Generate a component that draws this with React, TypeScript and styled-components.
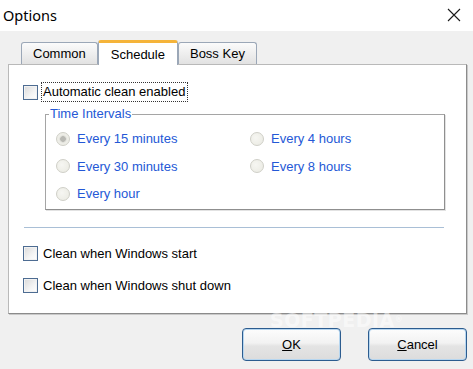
import styled, { createGlobalStyle } from 'styled-components';

const GlobalStyle = createGlobalStyle`
  html, body {
    margin: 0;
    padding: 0;
  }
  body {
    width: 473px;
    height: 369px;
    overflow: hidden;
    background: #f0f0f0;
    font-family: 'Liberation Sans', Arial, sans-serif;
  }
`;

type Tab = { label: string; active?: boolean };

const tabs: Tab[] = [
  { label: 'Common' },
  { label: 'Schedule', active: true },
  { label: 'Boss Key' },
];

const intervals = [
  { label: 'Every 15 minutes', checked: true },
  { label: 'Every 4 hours' },
  { label: 'Every 30 minutes' },
  { label: 'Every 8 hours' },
  { label: 'Every hour' },
];

function App() {
  return (
    <Window>
      <GlobalStyle />
      <TitleBar>
        <Title>Options</Title>
        <CloseIcon width="14" height="14" viewBox="0 0 14 14">
          <path d="M1 1 L13 13 M13 1 L1 13" stroke="#1a1a1a" strokeWidth="1.1" />
        </CloseIcon>
      </TitleBar>

      <Body>
        <TabStrip>
          {tabs.map((tab) => (
            <TabButton key={tab.label} $active={tab.active}>
              {tab.label}
            </TabButton>
          ))}
        </TabStrip>

        <Panel>
          <CheckRow $focus>
            <CheckBox />
            <FocusLabel>Automatic clean enabled</FocusLabel>
          </CheckRow>

          <Group>
            <Legend>Time Intervals</Legend>
            <RadioGrid>
              {intervals.map((item) => (
                <RadioRow key={item.label}>
                  <Radio $checked={item.checked} />
                  <RadioLabel>{item.label}</RadioLabel>
                </RadioRow>
              ))}
            </RadioGrid>
          </Group>

          <Separator />

          <CheckRow>
            <CheckBox />
            <CheckLabel>Clean when Windows start</CheckLabel>
          </CheckRow>
          <CheckRow>
            <CheckBox />
            <CheckLabel>Clean when Windows shut down</CheckLabel>
          </CheckRow>
        </Panel>

        <ButtonBar>
          <Watermark>SOFTPEDIA<sup>®</sup></Watermark>
          <Button>
            <u>O</u>K
          </Button>
          <Button>
            <u>C</u>ancel
          </Button>
        </ButtonBar>
      </Body>
    </Window>
  );
}

export default App;

const Window = styled.div`
  width: 473px;
  height: 369px;
  display: flex;
  flex-direction: column;
  background: #f0f0f0;
`;

const TitleBar = styled.div`
  height: 31px;
  background: #ffffff;
  display: flex;
  align-items: center;
  justify-content: space-between;
  padding: 0 12px 0 3px;
  box-sizing: border-box;
`;

const Title = styled.span`
  font-family: 'Noto Sans', 'Open Sans', sans-serif;
  font-size: 14.5px;
  color: #000;
  margin-top: -1px;
`;

const CloseIcon = styled.svg`
  display: block;
  margin-top: -1px;
`;

const Body = styled.div`
  display: flex;
  flex-direction: column;
  padding: 0 7px 0 8px;
`;

const TabStrip = styled.div`
  height: 33px;
  display: flex;
  align-items: flex-end;
  padding-left: 13px;
  position: relative;
  z-index: 1;
`;

const TabButton = styled.div<{ $active?: boolean }>`
  box-sizing: border-box;
  height: ${(p) => (p.$active ? '25px' : '22px')};
  margin-bottom: ${(p) => (p.$active ? '-1px' : '0')};
  padding: 0 ${(p) => (p.$active ? '12px' : '11px')};
  padding-top: ${(p) => (p.$active ? '1px' : '0')};
  display: flex;
  align-items: center;
  justify-content: center;
  font-size: 13px;
  color: #000;
  border: 1px solid #9ba7b7;
  border-bottom: none;
  border-radius: 3px 3px 0 0;
  border-top: ${(p) => (p.$active ? '3px solid #f5b43a' : '1px solid #9ba7b7')};
  background: ${(p) =>
    p.$active ? '#ffffff' : 'linear-gradient(#fbfbfb, #ececec 60%, #e2e2e2)'};
  & + & {
    margin-left: ${(p) => (p.$active ? '0' : '1px')};
  }
`;

const Panel = styled.div`
  box-sizing: border-box;
  width: 459px;
  height: 250px;
  background: #ffffff;
  border: 1px solid #b9b9b9;
  border-right-color: #8b8b8b;
  border-bottom-color: #8b8b8b;
  box-shadow: 1px 1px 0 #c9c9c9;
  display: flex;
  flex-direction: column;
  padding: 17px 0 0 14px;
`;

const CheckRow = styled.div<{ $focus?: boolean }>`
  display: flex;
  align-items: center;
  height: 20px;
  margin-bottom: ${(p) => (p.$focus ? '0' : '12px')};
`;

const CheckBox = styled.span`
  box-sizing: border-box;
  width: 15px;
  height: 15px;
  flex: none;
  border: 1px solid #4d6c92;
  background: linear-gradient(135deg, #d9d9d9, #f4f4f4 60%, #ffffff);
  box-shadow: inset 0 0 0 1px #f2f2f2;
`;

const CheckLabel = styled.span`
  font-size: 13px;
  color: #000;
  margin-left: 5px;
`;

const FocusLabel = styled(CheckLabel)`
  margin-left: 3px;
  padding: 1px 2px 2px 1px;
  border: 1px dotted #333;
`;

const Group = styled.fieldset`
  box-sizing: border-box;
  width: 400px;
  height: 103px;
  margin: 5px 0 0 22px;
  padding: 0 0 0 10px;
  border: 1px solid #a5a5a5;
  border-right-color: #8f8f8f;
  border-bottom-color: #8f8f8f;
  box-shadow: 1px 1px 0 #e2e2e2;
  min-width: 0;
`;

const Legend = styled.legend`
  font-size: 13px;
  color: #2458d6;
  padding: 0 1px;
  margin-left: -7px;
  line-height: 14px;
`;

const RadioGrid = styled.div`
  display: grid;
  grid-template-columns: 194px auto;
  grid-auto-rows: 27.5px;
  margin-top: 4px;
`;

const RadioRow = styled.div`
  display: flex;
  align-items: center;
`;

const Radio = styled.span<{ $checked?: boolean }>`
  box-sizing: border-box;
  width: 14px;
  height: 14px;
  flex: none;
  border-radius: 50%;
  border: 1px solid #cfcfc7;
  background: ${(p) =>
    p.$checked
      ? 'radial-gradient(circle, #b9b9b4 0 2.5px, #d8d8d2 3px, #ecece6 4px, #f1f1eb)'
      : 'radial-gradient(circle at 40% 40%, #f6f6f2, #e9e9e1)'};
`;

const RadioLabel = styled.span`
  font-size: 13px;
  color: #2458d6;
  margin-left: 7px;
`;

const Separator = styled.div`
  width: 420px;
  height: 1px;
  background: #a9bfd6;
  border-bottom: 1px solid #ffffff;
  margin: 17px 0 14px 1px;
`;

const ButtonBar = styled.div`
  position: relative;
  display: flex;
  justify-content: flex-end;
  gap: 27px;
  padding: 14px 0 0 0;
  margin-right: -1px;
`;

const Button = styled.div`
  box-sizing: border-box;
  width: 99px;
  height: 33px;
  display: flex;
  align-items: center;
  justify-content: center;
  font-size: 13px;
  color: #000;
  border: 1px solid #2c5c8f;
  border-radius: 4px;
  background: linear-gradient(#fdfdfd, #f2f2f2 45%, #e4e4e4 55%, #dcdcdc);
  box-shadow: inset 0 0 0 1px #b6d6f0;
`;

const Watermark = styled.span`
  position: absolute;
  left: 262px;
  top: -5px;
  z-index: 1;
  font-family: 'DejaVu Sans', sans-serif;
  font-weight: bold;
  font-size: 19px;
  line-height: 22px;
  letter-spacing: 0.5px;
  color: rgba(255, 255, 255, 0.5);
  pointer-events: none;
  sup {
    font-size: 8px;
    vertical-align: top;
  }
`;
